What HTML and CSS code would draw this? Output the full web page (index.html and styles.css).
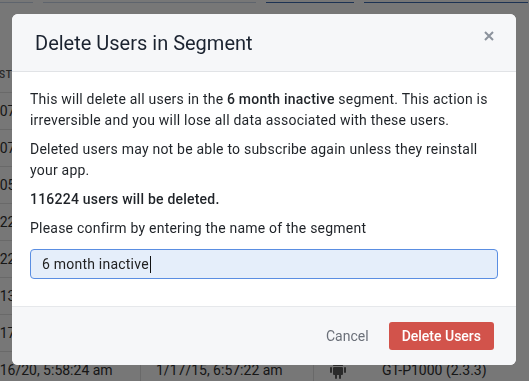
FILE: index.html
```html
<!DOCTYPE html>
<html lang="en">
  <head>
    <meta charset="UTF-8" />
    <meta name="viewport" content="width=device-width, initial-scale=1.0" />
    <title>Delete Users in Segment</title>
    <link rel="stylesheet" href="styles.css">
  </head>
  <body>
    <div class="page">
      <div class="toolbar">
        <span class="tool tool-a"></span>
        <span class="tool tool-b"></span>
        <span class="tool tool-c"></span>
        <span class="tool tool-d"></span>
      </div>

      <table class="users">
        <tr class="head">
          <th class="c1">LAST ACTIVE</th>
          <th class="c2">FIRST SESSION</th>
          <th class="c3"></th>
          <th class="c4">DEVICE</th>
        </tr>
        <tr><td class="c1">1/07/20, 4:12:08 am</td><td class="c2">1/17/15, 6:57:22 am</td><td class="c3"></td><td class="c4">GT-P1000 (2.3.3)</td></tr>
        <tr><td class="c1">1/07/20, 4:10:51 am</td><td class="c2">1/17/15, 6:57:22 am</td><td class="c3"></td><td class="c4">GT-P1000 (2.3.3)</td></tr>
        <tr><td class="c1">1/05/20, 9:44:02 pm</td><td class="c2">1/17/15, 6:57:22 am</td><td class="c3"></td><td class="c4">GT-P1000 (2.3.3)</td></tr>
        <tr><td class="c1">1/22/19, 2:31:40 pm</td><td class="c2">1/17/15, 6:57:22 am</td><td class="c3"></td><td class="c4">GT-P1000 (2.3.3)</td></tr>
        <tr><td class="c1">1/22/19, 2:30:16 pm</td><td class="c2">1/17/15, 6:57:22 am</td><td class="c3"></td><td class="c4">GT-P1000 (2.3.3)</td></tr>
        <tr><td class="c1">1/13/19, 8:03:55 am</td><td class="c2">1/17/15, 6:57:22 am</td><td class="c3"></td><td class="c4">GT-P1000 (2.3.3)</td></tr>
        <tr><td class="c1">1/17/19, 7:20:09 am</td><td class="c2">1/17/15, 6:57:22 am</td><td class="c3"></td><td class="c4">GT-P1000 (2.3.3)</td></tr>
        <tr>
          <td class="c1">1/16/20, 5:58:24 am</td>
          <td class="c2">1/17/15, 6:57:22 am</td>
          <td class="c3">
            <svg class="android" width="16" height="18" viewBox="0 0 16 18">
              <rect x="3" y="6" width="10" height="8" rx="1" fill="#5c5c5c" />
              <path d="M3 5 A5 4.5 0 0 1 13 5 Z" fill="#5c5c5c" />
              <rect x="0" y="6" width="2" height="6" rx="1" fill="#5c5c5c" />
              <rect x="14" y="6" width="2" height="6" rx="1" fill="#5c5c5c" />
              <rect x="5" y="13" width="2" height="5" rx="1" fill="#5c5c5c" />
              <rect x="9" y="13" width="2" height="5" rx="1" fill="#5c5c5c" />
            </svg>
          </td>
          <td class="c4">GT-P1000 (2.3.3)</td>
        </tr>
      </table>
    </div>

    <div class="overlay"></div>

    <div class="modal">
      <div class="modal-header">
        <h2>Delete Users in Segment</h2>
        <span class="close">
          <svg width="10" height="10" viewBox="0 0 10 10">
            <path d="M1 1 L9 9 M9 1 L1 9" stroke="#8b929c" stroke-width="2" />
          </svg>
        </span>
      </div>

      <div class="modal-body">
        <p>This will delete all users in the <b>6 month inactive</b> segment. This action is irreversible and you will lose all data associated with these users.</p>
        <p>Deleted users may not be able to subscribe again unless they reinstall your app.</p>
        <p><b>116224 users will be deleted.</b></p>
        <p>Please confirm by entering the name of the segment</p>
        <div class="segment-input">6 month inactive<span class="caret"></span></div>
      </div>

      <div class="modal-footer">
        <button class="cancel-btn">Cancel</button>
        <button class="delete-btn">Delete Users</button>
      </div>
    </div>
  </body>
</html>
```

FILE: styles.css
```css
body {
  margin: 0;
  font-family: Roboto, "Liberation Sans", sans-serif;
  background-color: #fff;
  overflow: hidden;
}

/* page behind the dialog */
.page {
  color: #333;
}

.toolbar {
  display: flex;
  gap: 10px;
  height: 2px;
  margin-top: -4px;
  padding-bottom: 4px;
}

.tool {
  display: block;
  height: 6px;
  border-bottom: 1px solid #c9d6ea;
}

.tool-a { width: 33px; }
.tool-b { width: 213px; }
.tool-c { width: 88px; border-bottom-color: #3d6bb3; }
.tool-d { width: 164px; border-bottom-color: #3d6bb3; }

.users {
  border-collapse: collapse;
  margin-left: -14px;
  margin-top: 54px;
  font-size: 14px;
  white-space: nowrap;
}

.users td,
.users th {
  height: 36px;
  padding: 0;
  border-bottom: 1px solid #e2e2e2;
  text-align: left;
}

.users th {
  height: 36px;
  font-size: 10px;
  font-weight: 500;
  letter-spacing: 0.5px;
  color: #555;
}

.users .c1 { width: 154px; }
.users .c2 { width: 157px; padding-left: 15px; border-left: 1px solid #e2e2e2; }
.users .c3 { width: 52px; padding-left: 16px; border-left: 1px solid #e2e2e2; }
.users .c4 { padding-left: 0; }

.android {
  display: block;
}

.overlay {
  position: fixed;
  inset: 0;
  background-color: rgba(0, 0, 0, 0.535);
}

/* dialog */
.modal {
  position: fixed;
  top: 14px;
  left: 12px;
  width: 504px;
  background-color: #fff;
  border-radius: 6px;
  overflow: hidden;
  color: #1f2328;
}

.modal-header {
  display: flex;
  align-items: center;
  justify-content: space-between;
  height: 57px;
  padding: 0 23px;
  background-color: #f6f7f9;
  border-bottom: 1px solid #e1e3e6;
}

.modal-header h2 {
  margin: 0;
  font-size: 20px;
  font-weight: 400;
  color: #1b2330;
}

.close {
  display: flex;
  margin-top: -14px;
  margin-right: -1px;
}

.modal-body {
  padding: 17px 18px 27px;
  font-size: 14px;
  line-height: 21px;
  letter-spacing: 0.22px;
}

.modal-body p {
  margin: 0 0 8px;
}

.modal-body b {
  font-weight: 500;
}

.segment-input {
  display: flex;
  align-items: center;
  box-sizing: border-box;
  height: 30px;
  margin-top: 10px;
  padding: 0 11px;
  background-color: #e5eefa;
  border: 1px solid #5a8ee2;
  border-radius: 4px;
  font-size: 14px;
  color: #222;
}

.caret {
  display: inline-block;
  width: 1px;
  height: 17px;
  margin-left: 1px;
  background-color: #111;
}

.modal-footer {
  display: flex;
  align-items: center;
  justify-content: flex-end;
  gap: 20px;
  height: 58px;
  padding: 0 22px;
  background-color: #f6f7f9;
  border-top: 1px solid #e6e8eb;
}

.modal-footer button {
  font-family: inherit;
  font-size: 14px;
  border: none;
  cursor: pointer;
}

.cancel-btn {
  padding: 0;
  background: none;
  color: #6b7079;
}

.delete-btn {
  height: 28px;
  padding: 0 13px;
  background-color: #d2534b;
  color: #fff;
  font-weight: 500;
  border-radius: 3px;
}
```
